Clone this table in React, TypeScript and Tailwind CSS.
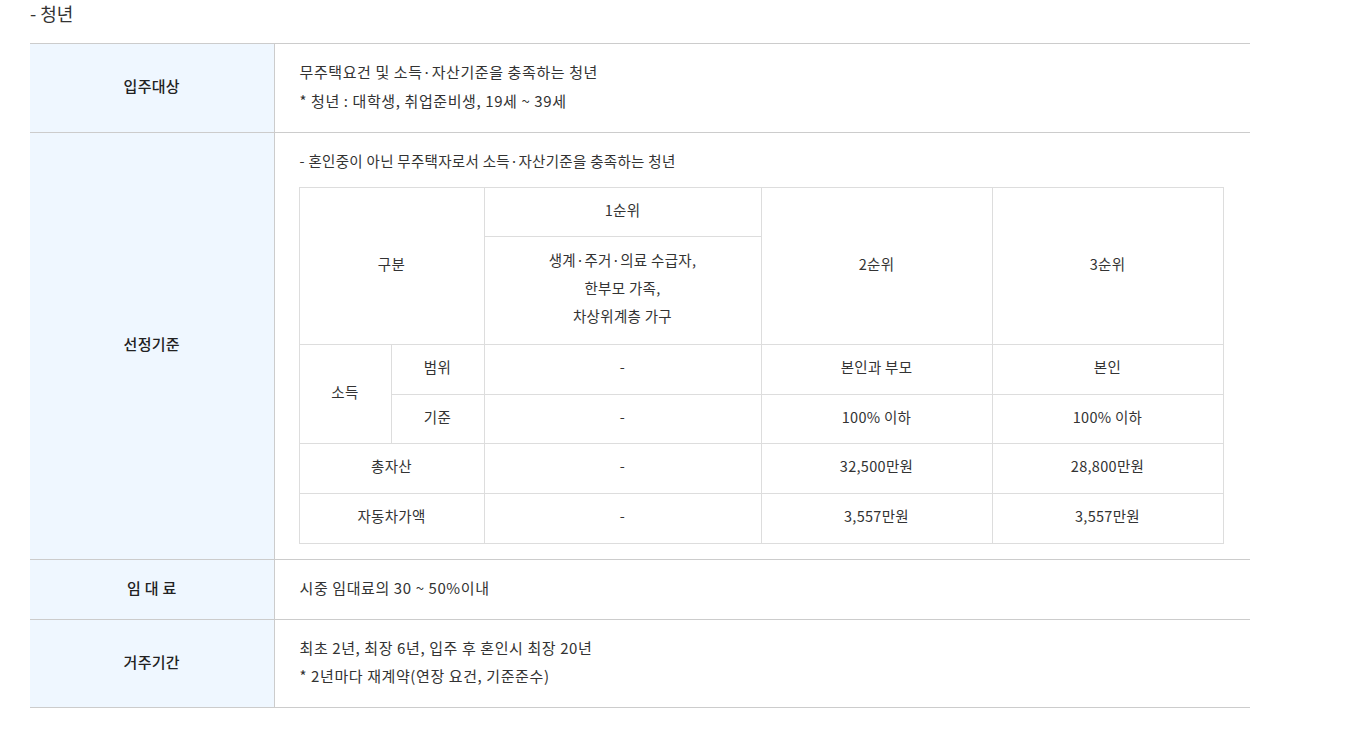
import React from "react";

const font = { fontFamily: '"Noto Sans CJK KR", "Noto Sans", sans-serif' };

const th = "bg-[#eff7ff] border-r border-[#cccccc] text-center align-middle font-medium text-[#222] w-[244px] text-[15px] pb-[4px]";
const td = "pl-[25px] pr-[26px] align-middle text-[#333]";
const ic = "border border-[#dddddd] text-center align-middle text-[#333] pb-[5px]";

export default function App() {
  return (
    <div className="bg-white w-[1352px] h-[749px] text-[15px] leading-[28px] tracking-[0.3px]" style={font}>
      <div className="pl-[30px] text-[18px] leading-[26px] text-[#333] tracking-normal">- 청년</div>
      <table className="ml-[30px] mt-[17px] w-[1220px] border-collapse table-fixed">
        <tbody>
          <tr className="border-t border-b border-[#cccccc] h-[89px]">
            <th className={th}>입주대상</th>
            <td className={`${td} pb-[4px] tracking-[0.6px]`}>
              <div className="leading-[29px]">무주택요건 및 소득·자산기준을 충족하는 청년</div>
              <div className="leading-[29px]">* 청년 : 대학생, 취업준비생, 19세 ~ 39세</div>
            </td>
          </tr>
          <tr className="border-b border-[#cccccc]">
            <th className={th}>선정기준</th>
            <td className={`${td} pt-[14px] pb-[15px]`}>
              <div className="text-[14.5px] leading-[27px]">- 혼인중이 아닌 무주택자로서 소득·자산기준을 충족하는 청년</div>
              <table className="mt-[13px] -ml-px w-[925px] border-collapse table-fixed text-[14.5px]">
                <colgroup>
                  <col className="w-[92px]" />
                  <col className="w-[93px]" />
                  <col className="w-[277px]" />
                  <col className="w-[231px]" />
                  <col className="w-[231px]" />
                </colgroup>
                <tbody>
                  <tr className="h-[49px]">
                    <td className={ic} colSpan={2} rowSpan={2}>구분</td>
                    <td className={ic}>1순위</td>
                    <td className={ic} rowSpan={2}>2순위</td>
                    <td className={ic} rowSpan={2}>3순위</td>
                  </tr>
                  <tr className="h-[108px]">
                    <td className={ic}>
                      <div>생계·주거·의료 수급자,</div>
                      <div>한부모 가족,</div>
                      <div>차상위계층 가구</div>
                    </td>
                  </tr>
                  <tr className="h-[50px]">
                    <td className={ic} rowSpan={2}>소득</td>
                    <td className={ic}>범위</td>
                    <td className={ic}>-</td>
                    <td className={ic}>본인과 부모</td>
                    <td className={ic}>본인</td>
                  </tr>
                  <tr className="h-[49px]">
                    <td className={ic}>기준</td>
                    <td className={ic}>-</td>
                    <td className={ic}>100% 이하</td>
                    <td className={ic}>100% 이하</td>
                  </tr>
                  <tr className="h-[50px]">
                    <td className={ic} colSpan={2}>총자산</td>
                    <td className={ic}>-</td>
                    <td className={ic}>32,500만원</td>
                    <td className={ic}>28,800만원</td>
                  </tr>
                  <tr className="h-[50px]">
                    <td className={ic} colSpan={2}>자동차가액</td>
                    <td className={ic}>-</td>
                    <td className={ic}>3,557만원</td>
                    <td className={ic}>3,557만원</td>
                  </tr>
                </tbody>
              </table>
            </td>
          </tr>
          <tr className="border-b border-[#cccccc] h-[60px]">
            <th className={th}>임 대 료</th>
            <td className={`${td} pb-[4px] tracking-[0.6px]`}>시중 임대료의 30 ~ 50%이내</td>
          </tr>
          <tr className="border-b border-[#cccccc] h-[88px]">
            <th className={th}>거주기간</th>
            <td className={`${td} pb-[4px] tracking-[0.6px]`}>
              <div>최초 2년, 최장 6년, 입주 후 혼인시 최장 20년</div>
              <div>* 2년마다 재계약(연장 요건, 기준준수)</div>
            </td>
          </tr>
        </tbody>
      </table>
    </div>
  );
}
